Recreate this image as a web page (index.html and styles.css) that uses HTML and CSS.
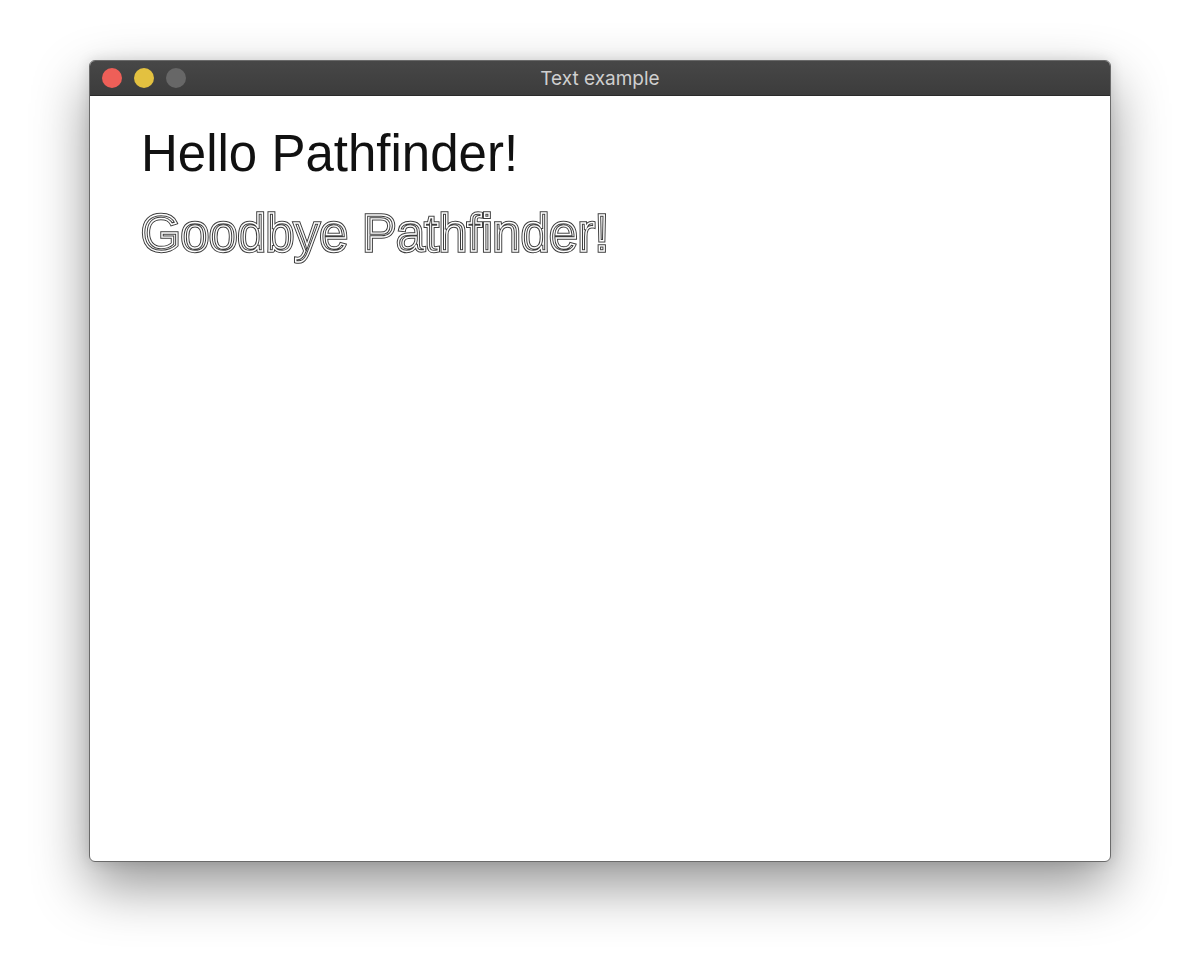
FILE: index.html
```html
<!DOCTYPE html>
<html lang="en">
  <head>
    <meta charset="UTF-8" />
    <meta name="viewport" content="width=device-width, initial-scale=1.0" />
    <title>Text example</title>
    <link rel="stylesheet" href="styles.css">
  </head>
  <body>
    <div class="window">
      <div class="titlebar">
        <div class="lights">
          <span class="light red"></span>
          <span class="light yellow"></span>
          <span class="light grey"></span>
        </div>
        <div class="title">Text example</div>
      </div>
      <div class="content">
        <div class="line filled">Hello Pathfinder!</div>
        <div class="line outlined" data-text="Goodbye Pathfinder!">Goodbye Pathfinder!</div>
      </div>
    </div>
  </body>
</html>
```

FILE: styles.css
```css
* {
  margin: 0;
  padding: 0;
  box-sizing: border-box;
}

body {
  background-color: #fff;
  font-family: "Liberation Sans", Arial, sans-serif;
  padding: 60px 89px 0 89px;
  height: 100vh;
}

.window {
  width: 1022px;
  height: 802px;
  border: 1px solid #6a6a6a;
  border-radius: 6px;
  background: #fff;
  overflow: hidden;
  display: flex;
  flex-direction: column;
  box-shadow: 0 24px 55px rgba(0, 0, 0, 0.42), 0 0 14px rgba(0, 0, 0, 0.12);
}

.titlebar {
  position: relative;
  height: 35px;
  background: linear-gradient(#474747, #3c3c3c);
  border-bottom: 1px solid #2a2a2a;
  display: flex;
  align-items: center;
  justify-content: center;
  flex-shrink: 0;
}

.lights {
  position: absolute;
  left: 12px;
  top: 7px;
  display: flex;
  gap: 12px;
}

.light {
  width: 20px;
  height: 20px;
  border-radius: 50%;
}

.light.red {
  background: #ee5f58;
}

.light.yellow {
  background: #e3c140;
}

.light.grey {
  background: #676767;
}

.title {
  color: #cfcfcf;
  font-family: Inter, "Liberation Sans", sans-serif;
  font-size: 19px;
  margin-top: 1px;
}

.content {
  flex: 1;
  padding: 18px 0 0 51px;
}

.line {
  font-size: 51px;
  line-height: 80px;
}

.filled {
  color: #111;
}

.outlined {
  position: relative;
  width: max-content;
  color: #fff;
  -webkit-text-stroke: 3.4px #3c3c3c;
}

.outlined::after {
  content: attr(data-text);
  position: absolute;
  left: 0;
  top: 0;
  color: transparent;
  -webkit-text-stroke: 1.4px #fff;
}
```
